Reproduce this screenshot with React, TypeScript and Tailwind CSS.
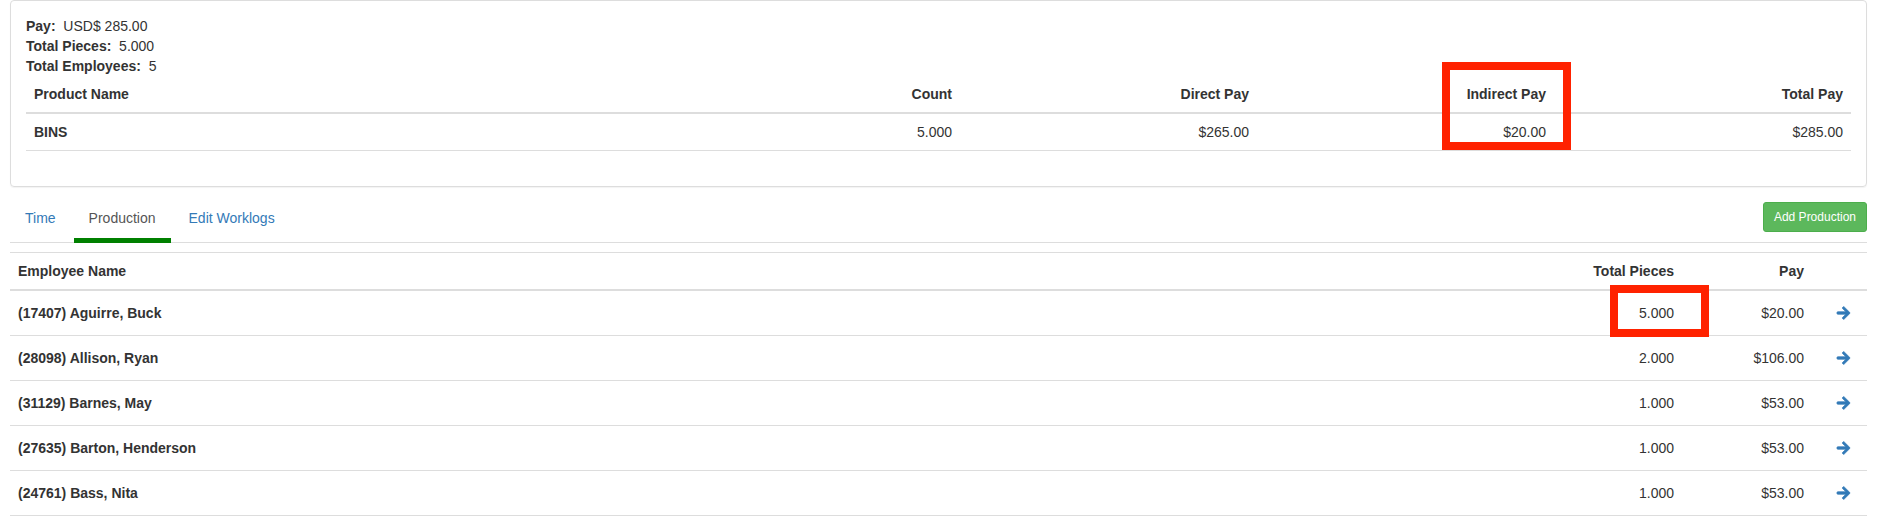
const products = [{ name: "BINS", count: "5.000", direct: "$265.00", indirect: "$20.00", total: "$285.00" }];

const employees = [
  { name: "(17407) Aguirre, Buck", pieces: "5.000", pay: "$20.00" },
  { name: "(28098) Allison, Ryan", pieces: "2.000", pay: "$106.00" },
  { name: "(31129) Barnes, May", pieces: "1.000", pay: "$53.00" },
  { name: "(27635) Barton, Henderson", pieces: "1.000", pay: "$53.00" },
  { name: "(24761) Bass, Nita", pieces: "1.000", pay: "$53.00" },
];

function ArrowRight() {
  return (
    <svg viewBox="-20 -20 488 552" className="w-[15px] h-[16px] fill-[#337ab7] stroke-[#337ab7]" strokeWidth={28} strokeLinejoin="round">
      <path d="M190.5 66.9l22.2-22.2c9.4-9.4 24.6-9.4 33.9 0L441 239c9.4 9.4 9.4 24.6 0 33.9L246.6 467.3c-9.4 9.4-24.6 9.4-33.9 0l-22.2-22.2c-9.5-9.5-9.3-25 .4-34.3L311.4 296H24c-13.3 0-24-10.7-24-24v-32c0-13.3 10.7-24 24-24h287.4L190.9 101.2c-9.8-9.3-10-24.8-.4-34.3z" />
    </svg>
  );
}

export default function App() {
  return (
    <div className="relative bg-white pl-[10px] pr-[11px] text-[14px] leading-[20px] text-[#333] font-['Liberation_Sans',Arial,sans-serif]">
      {/* summary panel */}
      <div className="border border-[#ddd] rounded-[4px] shadow-[0_1px_1px_rgba(0,0,0,0.05)] px-[15px] pt-[15px] pb-[15px]">
        <div>
          <strong>Pay:</strong>&nbsp; USD$ 285.00
        </div>
        <div>
          <strong>Total Pieces:</strong>&nbsp; 5.000
        </div>
        <div>
          <strong>Total Employees:</strong>&nbsp; 5
        </div>
        <div className="mb-[20px]">
          <div className="grid grid-cols-[1fr_297px_297px_297px_297px] font-bold border-b-2 border-[#ddd]">
            <div className="p-[8px]">Product Name</div>
            <div className="p-[8px] text-right">Count</div>
            <div className="p-[8px] text-right">Direct Pay</div>
            <div className="p-[8px] text-right">Indirect Pay</div>
            <div className="p-[8px] text-right">Total Pay</div>
          </div>
          {products.map((p) => (
            <div key={p.name} className="grid grid-cols-[1fr_297px_297px_297px_297px] border-b border-[#ddd]">
              <div className="p-[8px] font-bold">{p.name}</div>
              <div className="p-[8px] text-right">{p.count}</div>
              <div className="p-[8px] text-right">{p.direct}</div>
              <div className="p-[8px] text-right">{p.indirect}</div>
              <div className="p-[8px] text-right">{p.total}</div>
            </div>
          ))}
        </div>
      </div>

      {/* tabs */}
      <div className="mt-[11px] flex justify-between items-start border-b border-[#ddd]">
        <div className="flex gap-[3px]">
          <a className="px-[15px] pt-[10px] pb-[10px] border-b-4 border-transparent -mb-px text-[#337ab7]">Time</a>
          <a className="px-[15px] pt-[10px] pb-[10px] border-b-[5px] border-[#008000] -mb-px text-[#555]">Production</a>
          <a className="px-[15px] pt-[10px] pb-[10px] border-b-4 border-transparent -mb-px text-[#337ab7]">Edit Worklogs</a>
        </div>
        <button className="mt-[4px] bg-[#5cb85c] border border-[#4cae4c] text-white text-[12px] leading-[18px] px-[10px] py-[5px] rounded-[3px]">
          Add Production
        </button>
      </div>

      {/* employees table */}
      <div className="mt-[9px]">
        <div className="grid grid-cols-[1fr_150px_130px_55px] font-bold border-t border-b-2 border-[#ddd]">
          <div className="p-[8px]">Employee Name</div>
          <div className="p-[8px] text-right">Total Pieces</div>
          <div className="p-[8px] text-right">Pay</div>
          <div className="p-[8px]"></div>
        </div>
        {employees.map((e) => (
          <div key={e.name} className="grid grid-cols-[1fr_150px_130px_55px] border-b border-[#ddd]">
            <div className="px-[8px] py-[12px] font-bold">{e.name}</div>
            <div className="px-[8px] py-[12px] text-right">{e.pieces}</div>
            <div className="px-[8px] py-[12px] text-right">{e.pay}</div>
            <div className="pl-[24px] py-[12px] flex items-center">
              <ArrowRight />
            </div>
          </div>
        ))}
      </div>

      {/* annotation boxes */}
      <div className="absolute left-[1442px] top-[62px] w-[129px] h-[88px] border-[8px] border-[#ff2200]" />
      <div className="absolute left-[1610px] top-[285px] w-[99px] h-[52px] border-[8px] border-[#ff2200]" />
    </div>
  );
}
